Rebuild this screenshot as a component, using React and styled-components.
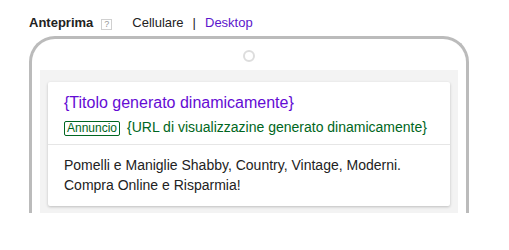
import React from "react";
import styled, { createGlobalStyle } from "styled-components";

const Global = createGlobalStyle`
  html, body { margin: 0; padding: 0; background: #fff; }
  body { font-family: Arial, "Liberation Sans", Helvetica, sans-serif; }
`;

const Page = styled.div`
  padding: 15px 0 0 29px;
  width: 440px;
`;

const Toolbar = styled.div`
  display: flex;
  align-items: center;
  height: 16px;
  font-size: 13px;
  line-height: 16px;
  color: #222;
`;

const Label = styled.span`
  font-weight: bold;
`;

const HelpBox = styled.span`
  box-sizing: border-box;
  width: 11px;
  height: 11px;
  margin-left: 8px;
  border: 1px solid #d0d0d0;
  font-size: 9px;
  line-height: 9px;
  color: #999;
  text-align: center;
  position: relative;
  top: 1px;
`;

const Option = styled.span`
  color: ${(p) => (p.$active ? "#5c16cc" : "#222")};
  margin-left: ${(p) => p.$ml || 0}px;
`;

const Sep = styled.span`
  margin: 0 9px;
`;

const Frame = styled.div`
  box-sizing: border-box;
  margin-top: 5px;
  height: 177px;
  border: 3px solid #bbb;
  border-bottom: none;
  border-radius: 26px 26px 0 0;
  display: flex;
  flex-direction: column;
  align-items: center;
`;

const Camera = styled.div`
  box-sizing: border-box;
  width: 12px;
  height: 12px;
  margin-top: 11px;
  border: 2px solid #ddd;
  border-radius: 50%;
`;

const Screen = styled.div`
  box-sizing: border-box;
  align-self: stretch;
  flex: 1;
  margin: 8px 8px 0;
  padding: 12px 8px 7px;
  background: #f3f3f3;
`;

const Card = styled.div`
  background: #fff;
  border-radius: 2px;
  box-shadow: 0 1px 3px rgba(0, 0, 0, 0.22);
`;

const AdHead = styled.div`
  padding: 11px 16px 7px;
  border-bottom: 1px solid #e6e6e6;
`;

const Title = styled.div`
  font-size: 16px;
  line-height: 20px;
  color: #640bd4;
`;

const UrlLine = styled.div`
  margin-top: 4px;
  display: flex;
  align-items: baseline;
  font-size: 14px;
  line-height: 20px;
  color: #006621;
`;

const Badge = styled.span`
  display: inline-block;
  border: 1px solid #006621;
  border-radius: 2px;
  padding: 0 2px;
  font-size: 12px;
  line-height: 13px;
  margin-right: 7px;
`;

const Desc = styled.div`
  padding: 10px 16px 11px;
  font-size: 14px;
  line-height: 20px;
  color: #222;
`;

export default function App() {
  return (
    <>
      <Global />
      <Page>
        <Toolbar>
          <Label>Anteprima</Label>
          <HelpBox>?</HelpBox>
          <Option $ml={20}>Cellulare</Option>
          <Sep>|</Sep>
          <Option $active>Desktop</Option>
        </Toolbar>
        <Frame>
          <Camera />
          <Screen>
            <Card>
              <AdHead>
                <Title>{"{Titolo generato dinamicamente}"}</Title>
                <UrlLine>
                  <Badge>Annuncio</Badge>
                  <span>{"{URL di visualizzazine generato dinamicamente}"}</span>
                </UrlLine>
              </AdHead>
              <Desc>
                Pomelli e Maniglie Shabby, Country, Vintage, Moderni.
                <br />
                Compra Online e Risparmia!
              </Desc>
            </Card>
          </Screen>
        </Frame>
      </Page>
    </>
  );
}
